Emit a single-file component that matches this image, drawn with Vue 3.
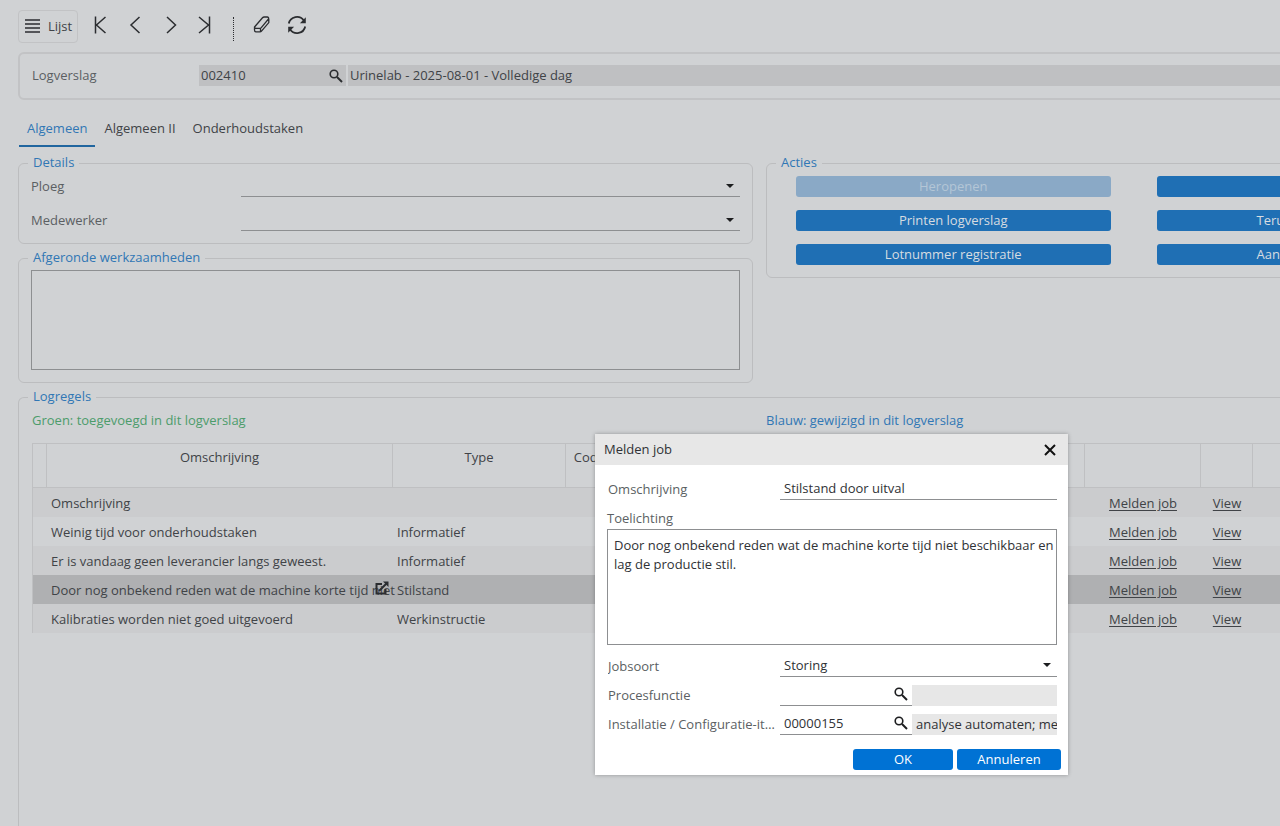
<script setup>
import { ref } from 'vue'

const tabs = ['Algemeen', 'Algemeen II', 'Onderhoudstaken']
const rows = [
  { text: 'Omschrijving', type: '' },
  { text: 'Weinig tijd voor onderhoudstaken', type: 'Informatief' },
  { text: 'Er is vandaag geen leverancier langs geweest.', type: 'Informatief' },
  { text: 'Door nog onbekend reden wat de machine korte tijd niet', type: 'Stilstand', selected: true },
  { text: 'Kalibraties worden niet goed uitgevoerd', type: 'Werkinstructie' },
]
const description = ref('Stilstand door uitval')
const note = ref('Door nog onbekend reden wat de machine korte tijd niet beschikbaar en lag de productie stil.')
const item = ref('00000155')
</script>

<template>
  <main class="page">
    <nav class="toolbar">
      <button class="list-btn">
        <svg width="16" height="16" viewBox="0 0 16 16"><path d="M0 2h15M0 6h15M0 10h15M0 14h15" stroke="#2b2d30" stroke-width="1.6" /></svg>
        <span>Lijst</span>
      </button>
      <button class="tool" aria-label="Eerste"><svg viewBox="0 0 20 20"><path d="M4.500 1.500v17M14.500 2L5.500 10l9 8" /></svg></button>
      <button class="tool" aria-label="Vorige"><svg viewBox="0 0 20 20"><path d="M13.500 2L5 10l8.500 8" /></svg></button>
      <button class="tool" aria-label="Volgende"><svg viewBox="0 0 20 20"><path d="M6 2l8.500 8L6 18" /></svg></button>
      <button class="tool" aria-label="Laatste"><svg viewBox="0 0 20 20"><path d="M13.500 1.500v17M3 2l9.500 8L3 18" /></svg></button>
      <span class="divider"></span>
      <button class="tool erase" aria-label="Wissen">
        <svg viewBox="0 0 20 20"><path d="M2.500 12L10.500 2.800q.7-.8 1.700-.8h3q1.800.1 1.300 1.900L9.300 12.600q-.6.800-1.600.8H4q-1.500 0-1.500-1.400zM2.500 12v3q0 1.900 1.600 1.900h3.800q1 0 1.600-.8l7.300-8.500V3.800M8.500 13.400v3.300" /></svg>
      </button>
      <button class="tool refresh" aria-label="Vernieuwen">
        <svg viewBox="0 0 20 20"><path d="M1.800 8.500a8.300 8.300 0 0 1 15-3M18.200 11.500a8.300 8.300 0 0 1-15 3" /><path class="solid" d="M18.800 2.300v5.900h-5.900zM1.200 17.700v-5.900h5.900z" /></svg>
      </button>
    </nav>

    <div class="workspace">
      <section class="record">
        <label for="log">Logverslag</label>
        <div class="lookup">
          <input id="log" value="002410" readonly />
          <button class="search" aria-label="Zoek logverslag"><svg viewBox="0 0 14 14"><circle cx="5" cy="5" r="3.800" /><path d="M8 8l5 5" /></svg></button>
        </div>
        <input class="record-name" aria-label="Naam logverslag" value="Urinelab - 2025-08-01 - Volledige dag" readonly />
      </section>

      <div class="tabs" role="tablist">
        <button v-for="(tab, i) in tabs" :key="tab" role="tab" :aria-selected="i === 0" :class="{ active: i === 0 }">{{ tab }}</button>
      </div>

      <div class="columns">
        <div class="column">
          <fieldset class="details">
            <legend>Details</legend>
            <div class="row">
              <label for="ploeg">Ploeg</label>
              <div class="drop"><select id="ploeg"><option></option></select><svg viewBox="0 0 8 4"><path d="M0 0h8L4 4z" /></svg></div>
            </div>
            <div class="row">
              <label for="medewerker">Medewerker</label>
              <div class="drop"><select id="medewerker"><option></option></select><svg viewBox="0 0 8 4"><path d="M0 0h8L4 4z" /></svg></div>
            </div>
          </fieldset>
          <fieldset class="done">
            <legend>Afgeronde werkzaamheden</legend>
            <textarea aria-label="Afgeronde werkzaamheden"></textarea>
          </fieldset>
        </div>
        <fieldset class="actions">
          <legend>Acties</legend>
          <div class="action-grid">
            <button disabled>Heropenen</button>
            <button class="wide" aria-label="Actie"></button>
            <button>Printen logverslag</button>
            <button class="wide">Teru</button>
            <button>Lotnummer registratie</button>
            <button class="wide">Aan</button>
          </div>
        </fieldset>
      </div>

      <fieldset class="log">
        <legend>Logregels</legend>
        <div class="hints">
          <span class="green">Groen: toegevoegd in dit logverslag</span>
          <span class="blue">Blauw: gewijzigd in dit logverslag</span>
        </div>
        <div class="table-box">
          <table>
            <colgroup>
              <col class="c-mark" /><col class="c-text" /><col class="c-type" /><col class="c-code" /><col class="c-space" /><col class="c-job" /><col class="c-view" /><col />
            </colgroup>
            <thead>
              <tr><th></th><th>Omschrijving</th><th>Type</th><th>Code</th><th></th><th></th><th></th><th></th></tr>
            </thead>
            <tbody>
              <tr v-for="row in rows" :key="row.text" :class="{ selected: row.selected }">
                <td></td>
                <td class="text">
                  {{ row.text }}
                  <svg v-if="row.selected" class="open" viewBox="0 0 14 14"><path d="M7 3H1.500v9.500h9V8M4 10l7.500-7.500" /><path class="solid" d="M8 .5h5.500V6z" /></svg>
                </td>
                <td class="type">{{ row.type }}</td>
                <td></td>
                <td></td>
                <td class="link"><a href="#">Melden job</a></td>
                <td class="link"><a href="#">View</a></td>
                <td></td>
              </tr>
            </tbody>
          </table>
        </div>
      </fieldset>
    </div>

    <div class="dialog" role="dialog" aria-labelledby="dialog-title">
      <header>
        <span id="dialog-title">Melden job</span>
        <button class="close" aria-label="Sluiten"><svg viewBox="0 0 12 12"><path d="M1 1l10 10M11 1L1 11" /></svg></button>
      </header>
      <form @submit.prevent>
        <div class="field">
          <label for="oms">Omschrijving</label>
          <input id="oms" v-model="description" class="line" />
        </div>
        <label class="note-label" for="note">Toelichting</label>
        <textarea id="note" v-model="note"></textarea>
        <div class="field">
          <label for="soort">Jobsoort</label>
          <div class="drop"><select id="soort"><option>Storing</option></select><svg viewBox="0 0 8 4"><path d="M0 0h8L4 4z" /></svg></div>
        </div>
        <div class="field">
          <label for="proces">Procesfunctie</label>
          <div class="lookup line">
            <input id="proces" />
            <button class="search" aria-label="Zoek procesfunctie"><svg viewBox="0 0 14 14"><circle cx="5" cy="5" r="3.800" /><path d="M8 8l5 5" /></svg></button>
          </div>
          <input class="readout" aria-label="Naam procesfunctie" readonly />
        </div>
        <div class="field">
          <label for="item">Installatie / Configuratie-item</label>
          <div class="lookup line">
            <input id="item" v-model="item" />
            <button class="search" aria-label="Zoek installatie"><svg viewBox="0 0 14 14"><circle cx="5" cy="5" r="3.800" /><path d="M8 8l5 5" /></svg></button>
          </div>
          <input class="readout" aria-label="Naam installatie" value="analyse automaten; me" readonly />
        </div>
        <footer>
          <button class="ok">OK</button>
          <button class="cancel" type="button">Annuleren</button>
        </footer>
      </form>
    </div>
  </main>
</template>

<style>
body { background: #d0d2d4; }
</style>

<style scoped>
* { box-sizing: border-box; }
.page {
  position: relative;
  display: flex;
  flex-direction: column;
  min-height: 100vh;
  padding: 10px 0 0 18px;
  overflow: hidden;
  background: #d0d2d4;
  color: #404347;
  font: 13px/18px "Open Sans", "Noto Sans", sans-serif;
}
button, input, select, textarea { font: inherit; color: inherit; }
button { border: 0; padding: 0; background: none; }
input, select { border: 0; margin: 0; border-radius: 0; outline: 0; background: none; min-width: 0; }
textarea { display: block; width: 100%; margin: 0; resize: none; border: 1px solid #8d8f91; background: none; outline: 0; }
select { appearance: none; }
svg { display: block; fill: none; }

.toolbar { display: flex; align-items: center; height: 33px; }
.list-btn { display: flex; align-items: center; gap: 7px; height: 33px; width: 60px; padding: 0 0 2px 6px; border: 1px solid #c2c3c5; border-radius: 4px; }
.tool { width: 20px; height: 20px; margin: 0 0 3px 15px; }
.list-btn + .tool { margin-left: 13px; }
.tool svg { width: 20px; height: 20px; stroke: #2b2d30; stroke-width: 1.5; }
.list-btn svg { flex: none; }
.tool .solid, .open .solid { fill: #2b2d30; stroke: none; }
.divider { height: 24px; margin: 4px 0 0 17px; border-left: 1px dotted #2b2d30; }
.tool.erase { margin-left: 18px; }
.tool.erase svg { stroke-width: 1.3; }
.tool.refresh svg { stroke-width: 1.8; }

.workspace { flex: 1; display: flex; flex-direction: column; margin: 9px -221px 0 0; }
.record { display: flex; align-items: center; height: 48px; padding: 0 12px 1px; border: 2px solid #c2c3c5; border-radius: 6px; color: #404347; }
label { color: #5b5f63; }
.record label { width: 167px; padding-bottom: 1px; }
.record .lookup { width: 147px; background: #bfc0c2; }
.record input { padding: 0 2px 1px; }
.lookup { display: flex; align-items: center; height: 21px; }
.lookup input { flex: 1; height: 20px; }
.search { width: 15px; height: 15px; margin-right: 2px; }
.search svg { width: 14px; height: 14px; stroke: #1c1d1f; stroke-width: 1.6; }
.search path { stroke-width: 2; }
.record .search svg { stroke: #2b2d30; }
.record .record-name { flex: 1; height: 21px; margin-left: 2px; background: #bfc0c2; }

.tabs { display: flex; gap: 1px; margin-top: 10px; padding-left: 1px; }
.tabs button { height: 37px; padding: 0 8px; border-bottom: 2px solid transparent; }
.tabs .active { color: #3177b5; border-color: #21669f; }

fieldset { min-width: 0; margin: 0; padding: 0 12px 12px; border: 1px solid #bcbdbf; border-radius: 6px; }
legend { margin-left: -3px; padding: 0 5px 2px; line-height: 16px; color: #3177b5; }
.columns { display: grid; grid-template-columns: 1fr 1fr; gap: 13px; align-items: start; margin-top: 7px; }
.column { display: grid; gap: 5px; }
.row { display: flex; align-items: center; margin-top: 13px; }
legend + .row { margin-top: 4px; }
.row label { width: 210px; flex: none; padding-bottom: 2px; }
.drop { position: relative; flex: 1; height: 21px; border-bottom: 1px solid #8d8f91; }
.drop select { display: block; width: 100%; height: 20px; }
.drop svg { position: absolute; right: 6px; top: 8px; width: 8px; height: 4px; fill: #1c1d1f; pointer-events: none; }
.done textarea { height: 100px; margin-top: 3px; }

.actions { padding: 0 29px 12px; }
.actions legend { margin-left: -20px; }
.action-grid { display: grid; grid-template-columns: 1fr 1fr; gap: 13px 46px; padding-top: 4px; }
.action-grid button { height: 21px; line-height: 18px; padding-bottom: 2px; border-radius: 3px; background: #1f6fb4; color: #d6dce1; text-align: center; }
.action-grid button:disabled { background: #8aa9c6; color: #b4c6d6; }
.action-grid .wide { padding-left: 100px; text-align: left; }

.log { flex: 1; display: flex; flex-direction: column; margin-top: 5px; padding: 0 12px 0 13px; border-bottom: 0; border-radius: 6px 6px 0 0; }
.log legend { margin-left: -4px; }
.hints { display: grid; grid-template-columns: 1fr 1fr; padding-top: 5px; margin-right: -12px; }
.green { color: #4c9c6b; }
.hints .blue { color: #3177b5; }
.table-box { flex: 1; margin-top: 14px; border: 1px solid #bfc0c2; border-bottom: 0; }
table { width: 100%; table-layout: fixed; border-collapse: separate; border-spacing: 0; }
.c-mark { width: 14px; }
.c-text { width: 346px; }
.c-type { width: 173px; }
.c-code { width: 48px; }
.c-space { width: 471px; }
.c-job { width: 116px; }
.c-view { width: 52px; }
th { height: 44px; padding: 4px 0 0; vertical-align: top; font-weight: 400; border-right: 1px solid #bfc0c2; border-bottom: 1px solid #bfc0c2; }
td { height: 29px; padding: 0; }
tbody tr:nth-child(odd) { background: #cbccce; }
tbody tr.selected { background: #afb0b2; }
td.text { position: relative; padding-left: 4px; white-space: nowrap; }
td.type { padding-left: 4px; }
.open { position: absolute; right: 4px; top: 6px; width: 14px; height: 14px; stroke: #2b2d30; stroke-width: 2; }
.link { text-align: center; }
a { color: inherit; text-underline-offset: 2px; }

.dialog { position: absolute; left: 595px; top: 434px; width: 473px; background: #fff; color: #303236; box-shadow: 0 0 4px rgba(0, 0, 0, 0.3); }
.dialog header { display: flex; align-items: center; justify-content: space-between; height: 31px; padding: 0 12px 0 9px; background: #e7e7e7; }
#dialog-title { padding-bottom: 2px; }
.close { width: 12px; height: 12px; }
.close svg { width: 12px; height: 12px; stroke: #111; stroke-width: 2; }
form { padding: 13px 11px 5px 12px; }
.field { display: flex; margin-bottom: 7px; }
.field label { flex: none; width: 172px; margin-left: 1px; line-height: 22px; height: 22px; white-space: nowrap; overflow: hidden; text-overflow: ellipsis; }
.field .line { height: 22px; border-bottom: 1px solid #8d8f91; }
.field > input.line { flex: 1; padding: 0 4px 2px; }
.field .drop, .field > .lookup { height: 22px; }
.field > .lookup.line { flex: none; width: 132px; }
.lookup.line input { padding: 0 4px 2px; width: 100px; }
.lookup.line .search { margin: 0 3px 2px 0; }
.field select { padding: 0 4px; }
.readout { flex: 1; height: 21px; margin-top: 1px; padding: 0 0 2px 4px; background: #e7e7e7; }
.note-label { display: block; height: 22px; line-height: 22px; }
form textarea { height: 116px; margin-bottom: 10px; padding: 6px 0 6px 6px; line-height: 19px; }
footer { display: flex; justify-content: flex-end; gap: 4px; margin: 14px -4px 0 0; }
footer button { height: 21px; padding-bottom: 2px; line-height: 18px; border-radius: 3px; background: #0072d4; color: #fff; font-weight: 500; }
.ok { width: 100px; }
.cancel { width: 104px; }
</style>
